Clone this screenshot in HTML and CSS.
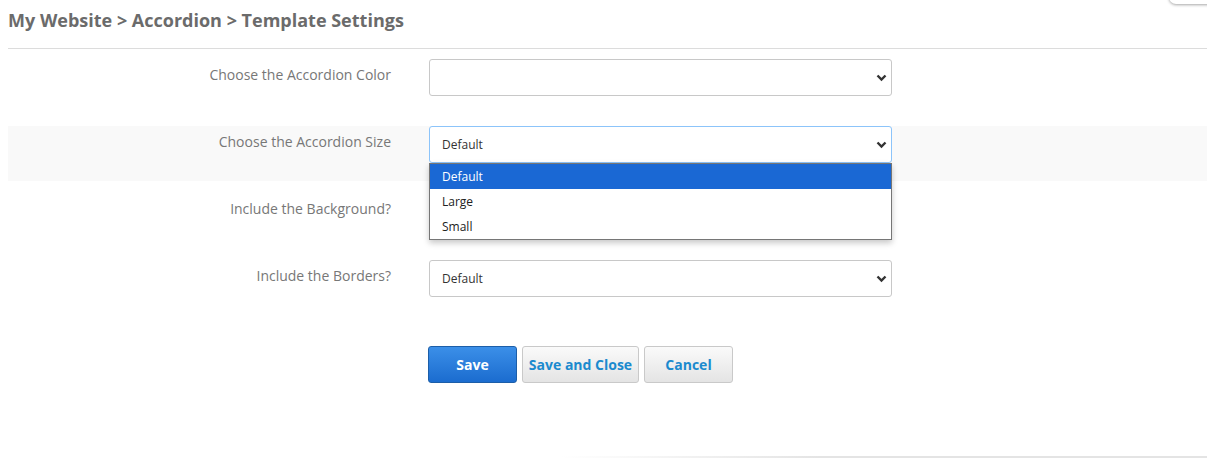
FILE: index.html
```html
<!DOCTYPE html>
<html lang="en">
<head>
<meta charset="utf-8">
<title>Template Settings</title>
<link rel="stylesheet" href="styles.css">
</head>
<body>
<div class="corner-tab"></div>
<div class="page">
  <h1 class="title">My Website &gt; Accordion &gt; Template Settings</h1>
  <hr class="rule">
  <form class="settings">
    <div class="row">
      <label class="label">Choose the Accordion Color</label>
      <div class="field">
        <div class="select"><span class="value"></span>
          <svg class="chev" width="11" height="8" viewBox="0 0 11 8"><path d="M1.5 1.5 L5.5 5.5 L9.5 1.5" fill="none" stroke="#333" stroke-width="2.4"/></svg>
        </div>
      </div>
    </div>
    <div class="row striped">
      <label class="label">Choose the Accordion Size</label>
      <div class="field">
        <div class="select focused"><span class="value">Default</span>
          <svg class="chev" width="11" height="8" viewBox="0 0 11 8"><path d="M1.5 1.5 L5.5 5.5 L9.5 1.5" fill="none" stroke="#333" stroke-width="2.4"/></svg>
        </div>
        <ul class="dropdown">
          <li class="option active">Default</li>
          <li class="option">Large</li>
          <li class="option">Small</li>
        </ul>
      </div>
    </div>
    <div class="row">
      <label class="label">Include the Background?</label>
      <div class="field">
        <div class="select"><span class="value"></span>
          <svg class="chev" width="11" height="8" viewBox="0 0 11 8"><path d="M1.5 1.5 L5.5 5.5 L9.5 1.5" fill="none" stroke="#333" stroke-width="2.4"/></svg>
        </div>
      </div>
    </div>
    <div class="row">
      <label class="label">Include the Borders?</label>
      <div class="field">
        <div class="select"><span class="value">Default</span>
          <svg class="chev" width="11" height="8" viewBox="0 0 11 8"><path d="M1.5 1.5 L5.5 5.5 L9.5 1.5" fill="none" stroke="#333" stroke-width="2.4"/></svg>
        </div>
      </div>
    </div>
    <div class="actions">
      <button type="button" class="btn primary save">Save</button>
      <button type="button" class="btn secondary close">Save and Close</button>
      <button type="button" class="btn secondary cancel">Cancel</button>
    </div>
  </form>
</div>
<div class="bottom-line"></div>
</body>
</html>
```

FILE: styles.css
```css
html, body {
  margin: 0;
  padding: 0;
  background: #fff;
}
body {
  font-family: "Open Sans", "Liberation Sans", sans-serif;
  padding: 8px 0 0 8px;
  height: 458px;
  box-sizing: border-box;
  position: relative;
  overflow: hidden;
}
.corner-tab {
  position: absolute;
  top: -30px;
  right: -10px;
  width: 48px;
  height: 34px;
  background: #fff;
  border-radius: 7px;
  box-shadow: 0 1px 3px rgba(0,0,0,0.35);
}
.title {
  margin: 0;
  font-size: 18px;
  line-height: 24px;
  font-weight: 700;
  color: #6b6b6b;
}
.rule {
  margin: 16px 0 10px 0;
  border: 0;
  border-top: 1px solid #dcdcdc;
  height: 0;
}
.settings {
  display: flex;
  flex-direction: column;
}
.row {
  display: grid;
  grid-template-columns: 383px 463px;
  column-gap: 38px;
  height: 55px;
  margin-bottom: 12px;
}
.row.striped {
  background: #f9f9f9;
}
.label {
  text-align: right;
  font-size: 14px;
  line-height: 20px;
  padding-top: 6px;
  color: #777;
}
.field {
  position: relative;
}
.select {
  position: relative;
  height: 37px;
  box-sizing: border-box;
  border: 1px solid #c8c8c8;
  border-radius: 3px;
  background: #fff;
  display: flex;
  align-items: center;
  padding-left: 12px;
  font-size: 12px;
  color: #333;
}
.select.focused {
  border-color: #8cc4fa;
}
.chev {
  position: absolute;
  right: 4px;
  top: 14px;
}
.dropdown {
  position: absolute;
  top: 37px;
  left: 0;
  width: 463px;
  box-sizing: border-box;
  margin: 0;
  padding: 0;
  list-style: none;
  background: #fff;
  border: 1px solid #767676;
  box-shadow: 0 3px 6px rgba(0,0,0,0.22);
  z-index: 5;
}
.option {
  height: 25px;
  line-height: 25px;
  padding-left: 12px;
  font-size: 12px;
  color: #222;
}
.option.active {
  background: #1a68d4;
  color: #fff;
}
.actions {
  display: flex;
  gap: 5px;
  padding-left: 420px;
  margin-top: 19px;
}
.btn {
  height: 37px;
  box-sizing: border-box;
  border-radius: 3px;
  font-family: "Open Sans", "Liberation Sans", sans-serif;
  font-size: 14px;
  font-weight: 700;
  cursor: pointer;
  padding: 0;
}
.btn.primary {
  background: linear-gradient(#3b8fe8, #1b6ccf);
  border: 1px solid #1c5ea8;
  color: #fff;
}
.btn.secondary {
  background: linear-gradient(#fafafa, #e4e4e4);
  border: 1px solid #c9c9c9;
  color: #1b8ace;
}
.save { width: 89px; }
.close { width: 117px; }
.cancel { width: 89px; }
.bottom-line {
  position: absolute;
  left: 560px;
  right: 0;
  bottom: 0;
  height: 2px;
  background: linear-gradient(to right, rgba(229,229,229,0), #e4e4e4 40%, #e4e4e4);
}
```
